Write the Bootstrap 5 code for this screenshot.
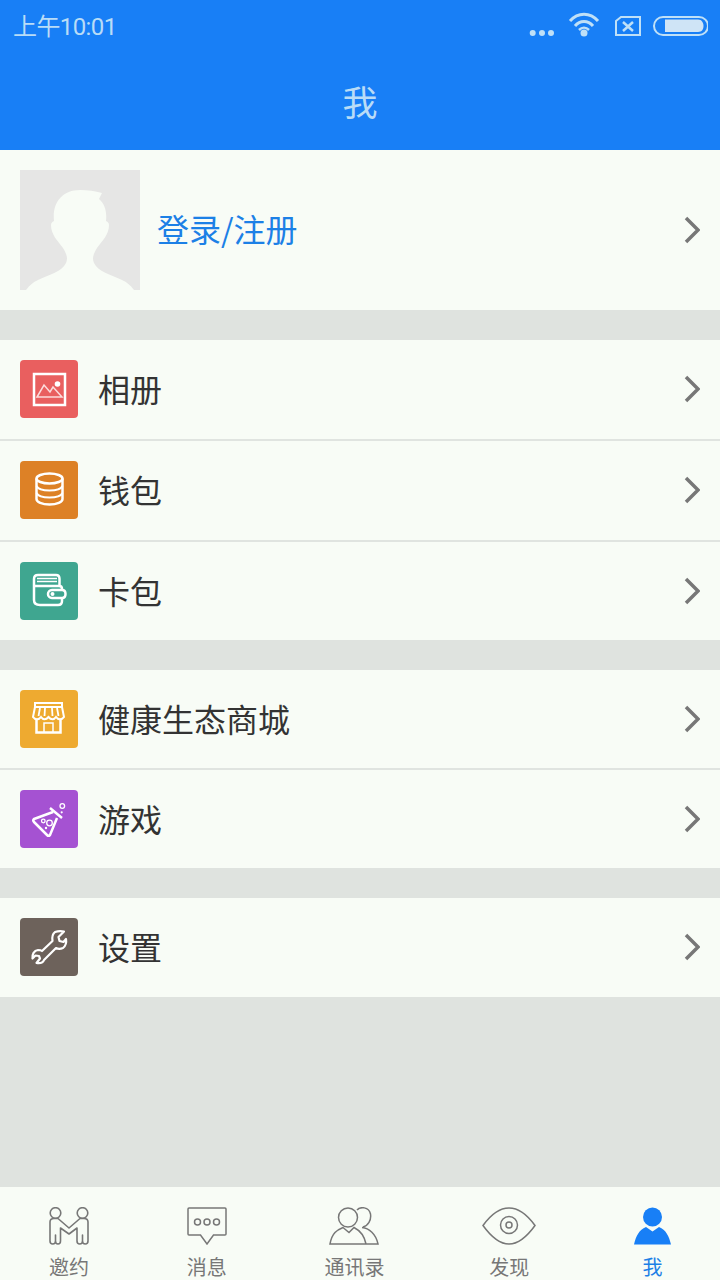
<!DOCTYPE html>
<html lang="zh-CN">
<head>
  <meta charset="UTF-8">
  <title>我</title>
  <link href="https://cdn.jsdelivr.net/npm/bootstrap@5.3.3/dist/css/bootstrap.min.css" rel="stylesheet">
  <style>
    body { font-family: "Noto Sans CJK SC", "Liberation Sans", sans-serif; background: #dfe3df; }
    .phone { width: 720px; height: 1280px; overflow: hidden; background: #dfe3df; }
    .top-blue { height: 150px; background: #187ff6; color: #b9dcf6; }
    .status-bar { height: 54px; padding: 0 12px 0 13px; }
    .clock { font-family: "Roboto", "Noto Sans CJK SC", sans-serif; font-size: 24px; letter-spacing: -.6px; line-height: 1; }
    .page-title { height: 96px; font-size: 35px; line-height: 1; padding-bottom: 4px; }
    .profile-row { height: 160px; background: #f8fcf6; padding: 0 20px; }
    .avatar { width: 120px; height: 120px; background: #e6e6e5; }
    .login-text { font-size: 32px; line-height: 1; color: #1c80e6; margin: 0 0 4px 17px; }
    .group-box { margin-top: 30px; background: #f8fcf6; }
    .menu-row { height: 98px; padding: 20px 20px 0; color: #333; font-size: 32px; line-height: 56px; }
    .row-tall { height: 99px; }
    .row-line { height: 100px; border-top: 2px solid #e0e4e0; }
    .row-tall.row-line { height: 101px; }
    .tile { width: 58px; height: 58px; border-radius: 4px; margin-right: 20px; }
    .tile-red { background: #e95f5f; }
    .tile-orange { background: #dd8126; }
    .tile-green { background: #3fa690; }
    .tile-yellow { background: #eeaa30; }
    .tile-purple { background: #a552d2; }
    .tile-brown { background: #6d625b; }
    .arrow { margin-top: 14px; }
    .tab-strip { height: 93px; margin-top: 190px; background: #f8fcf6; padding-top: 20px; color: #777; font-size: 20px; line-height: 1; }
    .tab-icon { height: 38px; display: block; margin-bottom: 12px; }
    .tab-on { color: #1c80e6; }
  </style>
</head>
<body>
  <div class="phone">

    <!-- status bar and title -->
    <div class="top-blue">
      <div class="status-bar d-flex align-items-center justify-content-between">
        <span class="clock">上午10:01</span>
        <svg width="180" height="32" viewBox="0 0 180 32" fill="none" stroke="#bfe0f7">
          <g fill="#bfe0f7" stroke="none"><circle cx="4.700" cy="22" r="3"/><circle cx="14" cy="22" r="3"/><circle cx="23" cy="22" r="3"/><circle cx="56" cy="22" r="3.500"/></g>
          <path d="M42 10C50 1 62 1 70 10M47 15C52 9 60 9 65 15" stroke-width="3"/>
          <path d="M51 19C54 16 58 16 61 19" stroke-width="2.500"/>
          <path d="M88 10L93 6H112V24H88Z" stroke-width="2"/>
          <path d="M95 11L105 20M105 11L95 20" stroke-width="2.500"/>
          <rect x="126" y="6" width="54" height="18" rx="9" stroke-width="2"/>
          <path d="M137 8.500H170C174 8.500 175.500 12 175.500 15C175.500 18 174 21 170 21H137Z" fill="#cfe4f6" stroke="none"/>
        </svg>
      </div>
      <div class="page-title d-flex align-items-center justify-content-center">我</div>
    </div>

    <!-- profile -->
    <div class="profile-row d-flex align-items-center">
      <svg class="avatar" viewBox="0 0 120 120">
        <path fill="#f8fcf6" d="M6 120C10 115 13 112 18 110C28 105 42 102 46 93C48 88 47 85 43 78C38 71 31 65 31 55C31 53 32 52 34 51C32 33 42 20 60 20C68 20 75 21 82 23L79 29C85 34 87 42 86 51C88 52 89 53 89 55C89 65 82 71 77 78C73 85 72 88 74 93C78 102 92 105 102 110C107 112 110 115 114 120Z"/>
      </svg>
      <span class="login-text">登录/注册</span>
      <svg class="ms-auto" width="18" height="30" viewBox="0 0 18 30"><path d="M4 3L16 15L4 27" fill="none" stroke="#777" stroke-width="3.500"/></svg>
    </div>

    <!-- albums, wallet, cards -->
    <div class="group-box">
      <div class="menu-row row-tall d-flex align-items-start">
        <svg class="tile tile-red" viewBox="0 0 58 58" fill="none" stroke="#fff" stroke-width="1.500">
          <rect x="14" y="14" width="31" height="31" stroke-width="2.500"/>
          <path d="M17 37L24 25L30 32L33 27L42 37Z" stroke="#fbdcdc"/>
          <circle cx="37.500" cy="24" r="2.800" fill="#fff" stroke="none"/>
        </svg>
        <span>相册</span>
        <svg class="arrow ms-auto" width="18" height="30" viewBox="0 0 18 30"><path d="M4 3L16 15L4 27" fill="none" stroke="#777" stroke-width="3.500"/></svg>
      </div>
      <div class="menu-row row-tall row-line d-flex align-items-start">
        <svg class="tile tile-orange" viewBox="0 0 58 58" fill="none" stroke="#fff" stroke-width="2.500">
          <ellipse cx="29.500" cy="17.500" rx="13" ry="5"/>
          <path d="M16.500 17.500V38C16.500 41 22 43.500 29.500 43.500C37 43.500 42.500 41 42.500 38V17.500"/>
          <path d="M16.500 25C18 28 24 29.500 29.500 29.500C35 29.500 41 28 42.500 25M16.500 32C18 35 24 36.500 29.500 36.500C35 36.500 41 35 42.500 32" stroke-width="2"/>
        </svg>
        <span>钱包</span>
        <svg class="arrow ms-auto" width="18" height="30" viewBox="0 0 18 30"><path d="M4 3L16 15L4 27" fill="none" stroke="#777" stroke-width="3.500"/></svg>
      </div>
      <div class="menu-row row-line d-flex align-items-start">
        <svg class="tile tile-green" viewBox="0 0 58 58" fill="none" stroke="#fff" stroke-width="2.500">
          <path d="M14 17C14 14.500 15.500 13 18 13H36C38 13 39.500 14.500 39.500 17V24H14"/>
          <path d="M14 17V38C14 41 16 43 20 43H38C40.500 43 42 41.500 42 39V36M39.500 24C41 24 42 25 42 27V28"/>
          <path d="M17 16.500H37M17 19.500H37" stroke-width="1.300"/>
          <path d="M32 28H42C44.500 28 45.500 30 45.500 32C45.500 34 44.500 36 42 36H32C29.500 36 28 34 28 32C28 30 29.500 28 32 28Z"/>
          <circle cx="32.500" cy="32" r="2" fill="#fff" stroke="none"/>
        </svg>
        <span>卡包</span>
        <svg class="arrow ms-auto" width="18" height="30" viewBox="0 0 18 30"><path d="M4 3L16 15L4 27" fill="none" stroke="#777" stroke-width="3.500"/></svg>
      </div>
    </div>

    <!-- shop, games -->
    <div class="group-box">
      <div class="menu-row d-flex align-items-start">
        <svg class="tile tile-yellow" viewBox="0 0 58 58" fill="none" stroke="#fff" stroke-width="2.500">
          <path d="M15 13H42V17H15Z" stroke-width="2"/>
          <path d="M15 17L13 27C15 30 19 30 21 27C23 30 26 30 28.500 27C31 30 34 30 36 27C38 30 42 30 44 27L42 17" stroke-width="2"/>
          <path d="M20 18L18.500 26M25 18L24.500 26M32 18L32.500 26M37 18L38.500 26" stroke-width="1.800"/>
          <path d="M16.500 30V42.500H40.500V30"/>
          <path d="M24 42.500V33H33V42.500" stroke-width="1.500"/>
        </svg>
        <span>健康生态商城</span>
        <svg class="arrow ms-auto" width="18" height="30" viewBox="0 0 18 30"><path d="M4 3L16 15L4 27" fill="none" stroke="#777" stroke-width="3.500"/></svg>
      </div>
      <div class="menu-row row-line d-flex align-items-start">
        <svg class="tile tile-purple" viewBox="0 0 58 58" fill="none" stroke="#fff" stroke-width="2.500">
          <path d="M30 18L42 28M33 22L14 29C13 30 13 31 14 32L27 45C28 46 29 46 30 45L37 28" stroke-linejoin="round"/>
          <circle cx="23.300" cy="31" r="1.800" stroke-width="1.300"/>
          <circle cx="29.500" cy="33" r="2.800" stroke-width="1.300"/>
          <circle cx="26" cy="38" r="1.200" fill="#fff" stroke="none"/>
          <circle cx="42.300" cy="16" r="2.300" stroke-width="1.300"/>
          <circle cx="41.700" cy="22.300" r="1.100" fill="#fff" stroke="none"/>
        </svg>
        <span>游戏</span>
        <svg class="arrow ms-auto" width="18" height="30" viewBox="0 0 18 30"><path d="M4 3L16 15L4 27" fill="none" stroke="#777" stroke-width="3.500"/></svg>
      </div>
    </div>

    <!-- settings -->
    <div class="group-box">
      <div class="menu-row row-tall d-flex align-items-start">
        <svg class="tile tile-brown" viewBox="0 0 58 58" fill="none" stroke="#fff" stroke-width="2.200">
          <path d="M35 14C39 12.500 42 13 44 13.500L38.500 19L39.500 23L43.500 24L46 21C46.500 24 45.500 28 43 30C40.500 31 38 31 36 30L24 42C23 45 20 45.500 16.500 45L20 40.500L19 38L15.500 37.500L12.500 40.500C12 36.500 14 32.500 18 32C20 32 21.500 32.500 22 33L32.500 23C32 20 32.500 16 35 14Z" stroke-linejoin="round"/>
        </svg>
        <span>设置</span>
        <svg class="arrow ms-auto" width="18" height="30" viewBox="0 0 18 30"><path d="M4 3L16 15L4 27" fill="none" stroke="#777" stroke-width="3.500"/></svg>
      </div>
    </div>

    <!-- bottom tabs -->
    <div class="tab-strip d-flex justify-content-around">
      <div class="d-flex flex-column align-items-center">
        <svg class="tab-icon" width="40" height="38" viewBox="0 0 40 38" fill="none" stroke="#777" stroke-width="1.600">
          <circle cx="6.500" cy="6" r="5.300"/><circle cx="33.500" cy="6" r="5.300"/>
          <path d="M5 11.500H9L20 21L31 11.500H35C37.500 11.500 39 13 39 15V34C39 38 33.500 38 33.500 34V28V34C33.500 38 28 38 28 34V21L20 27L11.500 21V34C11.500 38 6.500 38 6.500 34V28V34C6.500 38 1 38 1 34V15C1 13 2.500 11.500 5 11.500Z" stroke-linejoin="round"/>
        </svg>
        <span>邀约</span>
      </div>
      <div class="d-flex flex-column align-items-center">
        <svg class="tab-icon" width="40" height="38" viewBox="0 0 40 38" fill="none" stroke="#777" stroke-width="1.500">
          <path d="M2 1H38C38.500 1 39 1.500 39 2V27C39 27.500 38.500 28 38 28H26.500L20 37L13.500 28H2C1.500 28 1 27.500 1 27V2C1 1.500 1.500 1 2 1Z"/>
          <circle cx="10.500" cy="15" r="3"/><circle cx="20" cy="15" r="3"/><circle cx="29.500" cy="15" r="3"/>
        </svg>
        <span>消息</span>
      </div>
      <div class="d-flex flex-column align-items-center">
        <svg class="tab-icon" width="50" height="38" viewBox="0 0 50 38" fill="none" stroke="#777" stroke-width="1.500">
          <circle cx="19" cy="10.500" r="9.500"/>
          <path d="M28 3C31 -.5 40 -.5 41.500 7C42.500 13 39 19 34 20"/>
          <path d="M1 37C3 26 8 23 14 20.500L20 25.500L25 20.500C30 23 35 27 37 37ZM1 37H37M33 20.500C40 21 47 27 49 37H37"/>
        </svg>
        <span>通讯录</span>
      </div>
      <div class="d-flex flex-column align-items-center">
        <svg class="tab-icon" width="54" height="38" viewBox="0 0 54 38" fill="none" stroke="#777" stroke-width="1.500">
          <path d="M1 18.500C10 6 18 1 27 1C36 1 44 6 53 18.500C44 31 36 37 27 37C18 37 10 31 1 18.500Z"/>
          <circle cx="27" cy="18" r="8.500"/><circle cx="27" cy="18" r="3"/>
        </svg>
        <span>发现</span>
      </div>
      <div class="d-flex flex-column align-items-center tab-on">
        <svg class="tab-icon" width="37" height="38" viewBox="0 0 37 38" fill="#187ff6">
          <circle cx="18.500" cy="10" r="9.500"/>
          <path d="M0 37.500C2 29 5 23 12 20L18.500 24.500L25 20C32 23 35 29 37 37.500Z"/>
        </svg>
        <span>我</span>
      </div>
    </div>

  </div>
  <script src="https://cdn.jsdelivr.net/npm/bootstrap@5.3.3/dist/js/bootstrap.bundle.min.js"></script>
</body>
</html>
